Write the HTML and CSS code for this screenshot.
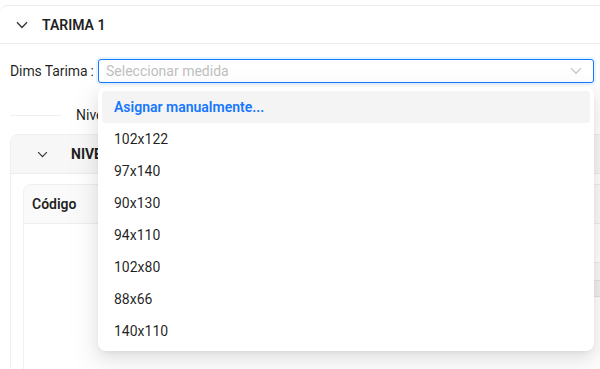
FILE: index.html
```html
<!DOCTYPE html>
<html lang="es">
<head>
<meta charset="utf-8">
<link rel="stylesheet" href="styles.css">
</head>
<body>
<div class="collapse">
  <div class="collapse-header">
    <svg class="chev" width="12" height="8" viewBox="0 0 12 8"><path d="M1 1.2 L6 6.5 L11 1.2" fill="none" stroke="#333" stroke-width="1.3"/></svg>
    <span class="collapse-title">TARIMA 1</span>
  </div>
  <div class="collapse-body">
    <div class="form-row">
      <label class="form-label">Dims Tarima<span class="colon">:</span></label>
      <div class="select-wrap">
        <div class="select">
          <span class="placeholder">Seleccionar medida</span>
          <svg class="select-arrow" width="12" height="8" viewBox="0 0 12 8"><path d="M1 1.2 L6 6.5 L11 1.2" fill="none" stroke="#c4c4c4" stroke-width="1.2"/></svg>
        </div>
        <div class="dropdown">
          <div class="option active">Asignar manualmente...</div>
          <div class="option">102x122</div>
          <div class="option">97x140</div>
          <div class="option">90x130</div>
          <div class="option">94x110</div>
          <div class="option">102x80</div>
          <div class="option">88x66</div>
          <div class="option">140x110</div>
        </div>
      </div>
    </div>

    <div class="divider">
      <span class="divider-line"></span>
      <span class="divider-text">Niveles de la tarima</span>
      <span class="divider-line grow"></span>
    </div>

    <div class="card">
      <div class="card-header">
        <svg class="chev small" width="11" height="7" viewBox="0 0 12 8"><path d="M1 1.2 L6 6.5 L11 1.2" fill="none" stroke="#333" stroke-width="1.3"/></svg>
        <span class="card-title">NIVEL 1</span>
      </div>
      <div class="card-body">
        <div class="table">
          <div class="thead">
            <div class="th first">Código</div>
            <div class="th">Descripción</div>
            <div class="th">Cantidad</div>
          </div>
          <div class="tbody">
            <div class="cell-empty"></div>
            <div class="cell-nested">
              <div class="n-row"></div>
              <div class="n-row light"></div>
              <div class="n-row gray"></div>
              <div class="n-text">Cantidad</div>
            </div>
          </div>
        </div>
      </div>
    </div>
  </div>
</div>
</body>
</html>
```

FILE: styles.css
```css
* { box-sizing: border-box; }
html, body { margin: 0; padding: 0; background: #fff; }
body {
  font-family: Roboto, "Noto Sans", "Liberation Sans", sans-serif;
  font-size: 14px;
  color: rgba(0,0,0,0.88);
  overflow: hidden;
  height: 369px;
}
.collapse {
  margin-top: 5px;
  border-top: 1px solid #ececec;
  border-radius: 8px 0 0 0;
}
.collapse-header {
  height: 38px;
  display: flex;
  align-items: center;
  padding-left: 16px;
  border-bottom: 1px solid #ececec;
}
.chev { display: block; }
.collapse-title {
  margin-left: 14px;
  font-weight: 600;
  color: #1f1f1f;
}
.collapse-body { padding: 15px 6px 0 10px; }
.form-row { display: flex; align-items: center; height: 24px; }
.form-label { width: 88px; white-space: nowrap; line-height: 24px; letter-spacing: -0.1px; }
.colon { margin-left: 3px; }
.select-wrap { position: relative; flex: 1; }
.select {
  height: 24px;
  border: 1px solid #1677ff;
  border-radius: 3px;
  box-shadow: 0 0 0 2px rgba(5,145,255,0.1);
  display: flex;
  align-items: center;
  padding: 0 11px 0 7px;
  background: #fff;
}
.placeholder { color: #bfbfbf; flex: 1; }
.select-arrow { display: block; }
.dropdown {
  position: absolute;
  top: 28px;
  left: 0;
  right: 0;
  z-index: 10;
  background: #fff;
  border-radius: 8px;
  padding: 4px;
  box-shadow: 0 6px 16px 0 rgba(0,0,0,0.08), 0 3px 6px -4px rgba(0,0,0,0.12), 0 9px 28px 8px rgba(0,0,0,0.05);
}
.option {
  height: 32px;
  line-height: 22px;
  padding: 5px 12px;
  border-radius: 4px;
  color: rgba(0,0,0,0.88);
}
.option.active {
  background: #f4f4f4;
  color: #1677ff;
  font-weight: 600;
}
.divider {
  display: flex;
  align-items: center;
  margin-top: 21px;
  height: 22px;
}
.divider-line { height: 1px; background: #efefef; width: 51px; }
.divider-line.grow { flex: 1; width: auto; }
.divider-text { padding: 0 14px 0 15px; }
.card {
  margin-top: 8px;
  margin-right: -30px;
  border: 1px solid #efefef;
  border-radius: 8px 8px 0 0;
  height: 260px;
}
.card-header {
  height: 39px;
  background: #f7f7f7;
  border-bottom: 1px solid #ececec;
  border-radius: 8px 8px 0 0;
  display: flex;
  align-items: center;
  padding-left: 26px;
}
.card-title { margin-left: 23px; font-weight: 700; color: #1f1f1f; }
.card-body { padding: 10px 12px 0 12px; }
.table {
  border: 1px solid #efefef;
  border-radius: 8px 8px 0 0;
  height: 200px;
}
.thead {
  display: flex;
  height: 39px;
  background: #fafafa;
  border-bottom: 1px solid #efefef;
  border-radius: 8px 8px 0 0;
}
.th { padding: 0 8px; line-height: 38px; font-weight: 600; flex: 1; }
.th.first { flex: 0 0 130px; }
.tbody { display: flex; }
.cell-empty { flex: 0 0 130px; }
.cell-nested { flex: 1; }
.n-row { height: 39px; border-bottom: 1px solid #ececec; }
.n-row.light { height: 18px; background: #f9f9f9; border-bottom: 1px solid #e6e6e6; }
.n-row.gray { height: 16px; background: #f1f1f1; border-bottom: 1px solid #e2e2e2; }
.n-text { padding: 14px 0 0 470px; color: #444; }
```
